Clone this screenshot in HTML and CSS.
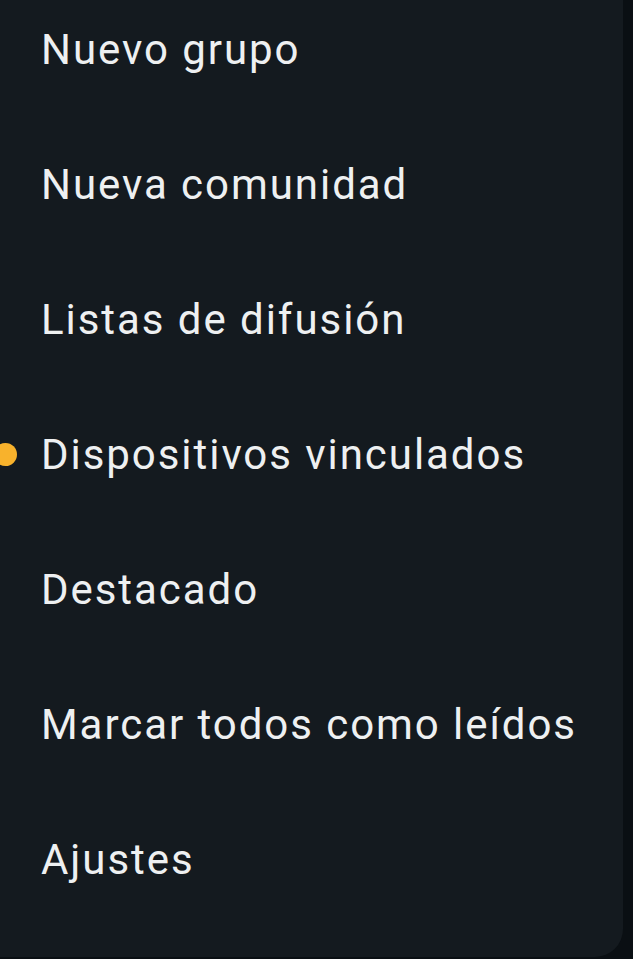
FILE: index.html
```html
<!DOCTYPE html>
<html lang="es">
<head>
    <meta charset="UTF-8">
    <meta name="viewport" content="width=device-width, initial-scale=1.0">
    <title>Menú</title>
    <link rel="stylesheet" href="styles.css">
</head>
<body>
    <div class="menu-panel">
        <ul class="menu-list">
            <li class="menu-item">Nuevo grupo</li>
            <li class="menu-item">Nueva comunidad</li>
            <li class="menu-item">Listas de difusión</li>
            <li class="menu-item has-dot">Dispositivos vinculados</li>
            <li class="menu-item">Destacado</li>
            <li class="menu-item">Marcar todos como leídos</li>
            <li class="menu-item">Ajustes</li>
        </ul>
    </div>
</body>
</html>
```

FILE: styles.css
```css
* {
    margin: 0;
    padding: 0;
    box-sizing: border-box;
}

html, body {
    height: 100%;
}

body {
    background: #0a0f13;
    font-family: Roboto, 'Noto Sans', sans-serif;
    color: #eef0f1;
    overflow: hidden;
}

.menu-panel {
    width: 623px;
    height: 957px;
    background: #141a1f;
    border-bottom-right-radius: 28px;
    overflow: hidden;
}

.menu-list {
    list-style: none;
    margin-top: -18px;
}

.menu-item {
    position: relative;
    height: 135px;
    display: flex;
    align-items: center;
    padding-left: 41px;
    font-size: 42px;
    letter-spacing: 1.95px;
}

.menu-item.has-dot::before {
    content: "";
    position: absolute;
    left: -6px;
    top: 50%;
    width: 23px;
    height: 23px;
    margin-top: -12px;
    border-radius: 50%;
    background: #f8b22c;
}
```
